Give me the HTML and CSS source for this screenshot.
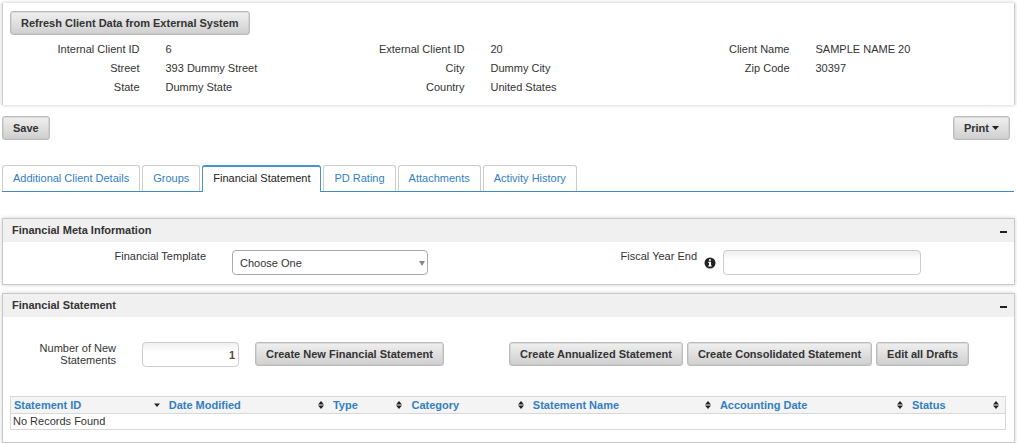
FILE: index.html
```html
<!DOCTYPE html>
<html lang="en">
<head>
<meta charset="utf-8">
<title>Client - Financial Statement</title>
<meta name="viewport" content="width=device-width, initial-scale=1">
<link rel="stylesheet" href="styles.css">
</head>
<body>
<section class="client">
  <button class="btn" type="button">Refresh Client Data from External System</button>
  <dl class="client-info">
    <dt>Internal Client ID</dt><dd>6</dd>
    <dt>External Client ID</dt><dd>20</dd>
    <dt>Client Name</dt><dd>SAMPLE NAME 20</dd>
    <dt>Street</dt><dd>393 Dummy Street</dd>
    <dt>City</dt><dd>Dummy City</dd>
    <dt>Zip Code</dt><dd>30397</dd>
    <dt>State</dt><dd>Dummy State</dd>
    <dt>Country</dt><dd>United States</dd>
  </dl>
</section>

<div class="actions">
  <button class="btn" type="button">Save</button>
  <button class="btn btn-menu" type="button">Print<svg class="caret" viewBox="0 0 7 4" aria-hidden="true"><path d="M0 0h7L3.500 4z"/></svg></button>
</div>

<nav class="tabs">
  <a class="tab" href="#details">Additional Client Details</a>
  <a class="tab" href="#groups">Groups</a>
  <a class="tab tab-active" href="#statement" aria-current="page">Financial Statement</a>
  <a class="tab" href="#rating">PD Rating</a>
  <a class="tab" href="#attachments">Attachments</a>
  <a class="tab" href="#history">Activity History</a>
</nav>

<section class="panel">
  <header class="panel-head">
    <h2>Financial Meta Information</h2>
    <button class="collapse" type="button" aria-label="Collapse Financial Meta Information"></button>
  </header>
  <div class="meta">
    <label for="template">Financial Template</label>
    <div class="select-wrap">
      <select id="template" class="field"><option>Choose One</option></select>
      <svg class="select-arrow" viewBox="0 0 6 5" aria-hidden="true"><path d="M0 0h6L3 5z"/></svg>
    </div>
    <label for="fiscal">Fiscal Year End</label>
    <div class="fiscal">
      <svg class="info" viewBox="0 0 12 12" role="img" aria-label="Info"><circle cx="6" cy="6" r="5.500" fill="#222"/><path d="M5 2.200h2v1.600H5zM4.300 4.800H7v3.400h.7v1.300H4.300V8.200H5V6h-.7z" fill="#fff"/></svg>
      <input id="fiscal" class="field field-shaded" type="text">
    </div>
  </div>
</section>

<section class="panel" id="statement">
  <header class="panel-head">
    <h2>Financial Statement</h2>
    <button class="collapse" type="button" aria-label="Collapse Financial Statement"></button>
  </header>
  <div class="toolbar">
    <label for="count">Number of New Statements</label>
    <input id="count" class="field field-shaded count" type="text" value="1">
    <button class="btn" type="button">Create New Financial Statement</button>
    <div class="toolbar-group">
      <button class="btn" type="button">Create Annualized Statement</button>
      <button class="btn" type="button">Create Consolidated Statement</button>
      <button class="btn" type="button">Edit all Drafts</button>
    </div>
  </div>
  <svg width="0" height="0" class="defs" aria-hidden="true">
    <symbol id="both" viewBox="0 0 6 8"><path d="M3 0l3 3.500H0zM0 4.500h6L3 8z"/></symbol>
    <symbol id="down" viewBox="0 0 6 8"><path d="M0 2.500h6L3 6z"/></symbol>
  </svg>
  <table class="records">
    <colgroup><col class="c-id"><col class="c-date"><col class="c-type"><col class="c-cat"><col class="c-name"><col class="c-acc"><col class="c-status"></colgroup>
    <thead>
      <tr>
        <th><a href="#id">Statement ID<svg class="sort"><use href="#down"/></svg></a></th>
        <th><a href="#modified">Date Modified<svg class="sort"><use href="#both"/></svg></a></th>
        <th><a href="#type">Type<svg class="sort"><use href="#both"/></svg></a></th>
        <th><a href="#category">Category<svg class="sort"><use href="#both"/></svg></a></th>
        <th><a href="#name">Statement Name<svg class="sort"><use href="#both"/></svg></a></th>
        <th><a href="#accounting">Accounting Date<svg class="sort"><use href="#both"/></svg></a></th>
        <th><a href="#status">Status<svg class="sort"><use href="#both"/></svg></a></th>
      </tr>
    </thead>
    <tbody><tr><td colspan="7">No Records Found</td></tr></tbody>
  </table>
</section>
</body>
</html>
```
FILE: styles.css
```css
* { box-sizing: border-box; }

body {
  margin: 0;
  padding: 3px 2px 0;
  background: #fff;
  color: #333;
  font: 11px/18px "Liberation Sans", Arial, sans-serif;
}

button, input, select { font: inherit; color: inherit; }
a { color: #337ec2; text-decoration: none; }

.btn {
  height: 24px;
  padding: 0 10px;
  border: 1px solid #bbb;
  border-radius: 3px;
  background: linear-gradient(#f0f0f0, #cfcfcf);
  box-shadow: inset 0 0 0 1px rgba(190, 190, 190, .4);
  color: #333;
  font-weight: bold;
  line-height: 22px;
  white-space: nowrap;
}

.client {
  padding: 8px 0 8px 7px;
  border: solid #ccc;
  border-width: 0 1px;
  box-shadow: 0 0 4px rgba(0, 0, 0, .22);
}

.client-info {
  display: grid;
  grid-template-columns: repeat(6, 1fr);
  grid-auto-rows: 19px;
  column-gap: 26px;
  margin: 5px 62px 0 -7px;
}

.client-info dt { text-align: right; }
.client-info dd { margin: 0; white-space: nowrap; }

.actions {
  display: flex;
  justify-content: space-between;
  margin: 11px 5px 0 0;
}

.caret { width: 7px; height: 4px; margin-left: 3px; vertical-align: 2px; fill: #222; }

.tabs {
  display: flex;
  gap: 2px;
  margin: 25px 1px 26px 0;
  border-bottom: 1px solid #4189bf;
}

.tab {
  height: 26px;
  padding: 0 10px;
  border: 1px solid #ccc;
  border-bottom: 0;
  border-radius: 3px 3px 0 0;
  line-height: 25px;
  white-space: nowrap;
}

.tab-active {
  height: 27px;
  margin-bottom: -1px;
  border-color: #4a94cc;
  border-top-width: 2px;
  background: #fff;
  color: #222;
  line-height: 23px;
}

.panel {
  margin-bottom: 8px;
  border: 1px solid #c8c8c8;
  box-shadow: 0 0 4px rgba(0, 0, 0, .18);
}

.panel-head {
  display: flex;
  align-items: center;
  justify-content: space-between;
  height: 23px;
  padding: 0 7px 0 9px;
  background: #f0f0f0;
}

.panel-head h2 { margin: 0; padding-bottom: 1px; font-size: 11px; line-height: 20px; }

.collapse {
  width: 7px;
  height: 2px;
  margin-top: 2px;
  padding: 0;
  border: 0;
  background: #222;
}

.field {
  width: 100%;
  height: 25px;
  padding: 0 7px;
  border: 1px solid #aaa;
  border-radius: 4px;
  background: #fff;
}

.field-shaded {
  border-color: #ccc;
  background: linear-gradient(#f0eeee, #fff 9px);
}

.meta {
  display: grid;
  grid-template-columns: 203fr 222fr 269fr 224fr 93fr;
  padding: 8px 0 9px;
}

.meta label { line-height: 12px; text-align: right; }
.select-wrap { position: relative; margin-left: 26px; }
.select-wrap select { appearance: none; }
.select-arrow { position: absolute; right: 3px; top: 11px; width: 6px; height: 5px; fill: #888; }

.fiscal { display: flex; align-items: center; gap: 7px; padding-left: 7px; }
.info { width: 12px; height: 12px; flex: none; }

.toolbar {
  display: flex;
  align-items: flex-start;
  padding: 25px 45px 29px 0;
}

.toolbar label { width: 113px; padding-left: 33px; line-height: 12px; text-align: right; }
.count { width: 97px; margin: 0 16px 0 26px; padding-right: 3px; text-align: right; font-weight: bold; color: #5a4a3a; }
.toolbar-group { display: flex; gap: 4px; margin-left: auto; }

.defs { display: block; }

.records {
  width: calc(100% - 15px);
  margin: 0 8px 12px 7px;
  border: 1px solid #d8d8d8;
  border-collapse: collapse;
  table-layout: fixed;
}

.c-id { width: 15.600%; }
.c-date { width: 16.500%; }
.c-type { width: 7.900%; }
.c-cat { width: 12.200%; }
.c-name { width: 18.800%; }
.c-acc { width: 19.300%; }
.c-status { width: 9.700%; }

.records th { height: 17px; padding: 0 6px 0 3px; background: #f4f4f4; text-align: left; line-height: 16px; border-bottom: 1px solid #d8d8d8; }
.records th a { display: flex; align-items: center; justify-content: space-between; }
.records td { padding: 0 2px; line-height: 15px; }
.sort { width: 6px; height: 8px; flex: none; fill: #222; }
```
